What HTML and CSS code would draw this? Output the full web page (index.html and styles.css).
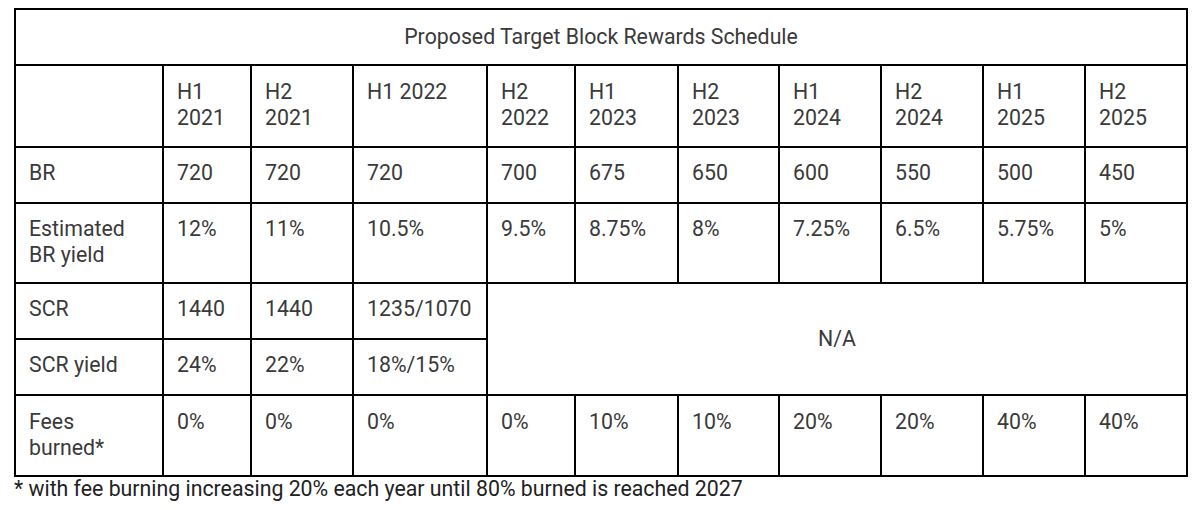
FILE: index.html
```html
<!DOCTYPE html>
<html>
<head>
<meta charset="utf-8">
<link rel="stylesheet" href="styles.css">
</head>
<body>
<div class="wrap">
<table class="sched">
  <colgroup>
    <col class="c-label">
    <col class="c88">
    <col class="c102">
    <col class="c134">
    <col class="c88">
    <col class="c103">
    <col class="c101">
    <col class="c102">
    <col class="c102">
    <col class="c102">
    <col class="c102">
  </colgroup>
  <tr class="r-title"><td colspan="11" class="title">Proposed Target Block Rewards Schedule</td></tr>
  <tr class="r-two">
    <td></td><td>H1<br>2021</td><td>H2<br>2021</td><td>H1 2022</td><td>H2<br>2022</td><td>H1<br>2023</td><td>H2<br>2023</td><td>H1<br>2024</td><td>H2<br>2024</td><td>H1<br>2025</td><td>H2<br>2025</td>
  </tr>
  <tr class="r-one">
    <td>BR</td><td>720</td><td>720</td><td>720</td><td>700</td><td>675</td><td>650</td><td>600</td><td>550</td><td>500</td><td>450</td>
  </tr>
  <tr class="r-two2">
    <td>Estimated<br>BR yield</td><td>12%</td><td>11%</td><td>10.5%</td><td>9.5%</td><td>8.75%</td><td>8%</td><td>7.25%</td><td>6.5%</td><td>5.75%</td><td>5%</td>
  </tr>
  <tr class="r-one">
    <td>SCR</td><td>1440</td><td>1440</td><td>1235/1070</td><td colspan="7" rowspan="2" class="na">N/A</td>
  </tr>
  <tr class="r-one">
    <td>SCR yield</td><td>24%</td><td>22%</td><td>18%/15%</td>
  </tr>
  <tr class="r-two3">
    <td>Fees<br>burned*</td><td>0%</td><td>0%</td><td>0%</td><td>0%</td><td>10%</td><td>10%</td><td>20%</td><td>20%</td><td>40%</td><td>40%</td>
  </tr>
</table>
<p class="note">* with fee burning increasing 20% each year until 80% burned is reached 2027</p>
</div>
</body>
</html>
```

FILE: styles.css
```css
html, body {
  margin: 0;
  padding: 0;
  background: #ffffff;
}
.wrap {
  padding: 8px 0 0 14px;
  font-family: Roboto, "Liberation Sans", sans-serif;
}
.sched {
  border-collapse: collapse;
  table-layout: fixed;
  width: 1174px;
  color: #3a3a3a;
  font-size: 21.3px;
  line-height: 26px;
}
.c-label { width: 148px; }
.c88 { width: 88px; }
.c134 { width: 134px; }
.c103 { width: 103px; }
.c101 { width: 101px; }
.c102 { width: 102px; }
.sched td {
  border: 2px solid #000;
  vertical-align: top;
  padding: 12px 13px 0 13px;
  box-sizing: border-box;
}
.r-two td,
.r-two3 td {
  padding-top: 13px;
}
.r-title { height: 56px; }
.r-two { height: 82px; }
.r-one { height: 56px; }
.r-two2 { height: 80px; }
.r-two3 { height: 81px; }
.sched td.title {
  text-align: center;
  vertical-align: middle;
  padding: 0 13px;
}
.sched td.na {
  text-align: center;
  vertical-align: middle;
  padding: 0 13px;
}
.note {
  margin: 0;
  padding-top: 0;
  font-size: 21.3px;
  line-height: 24px;
  color: #222;
}
```
